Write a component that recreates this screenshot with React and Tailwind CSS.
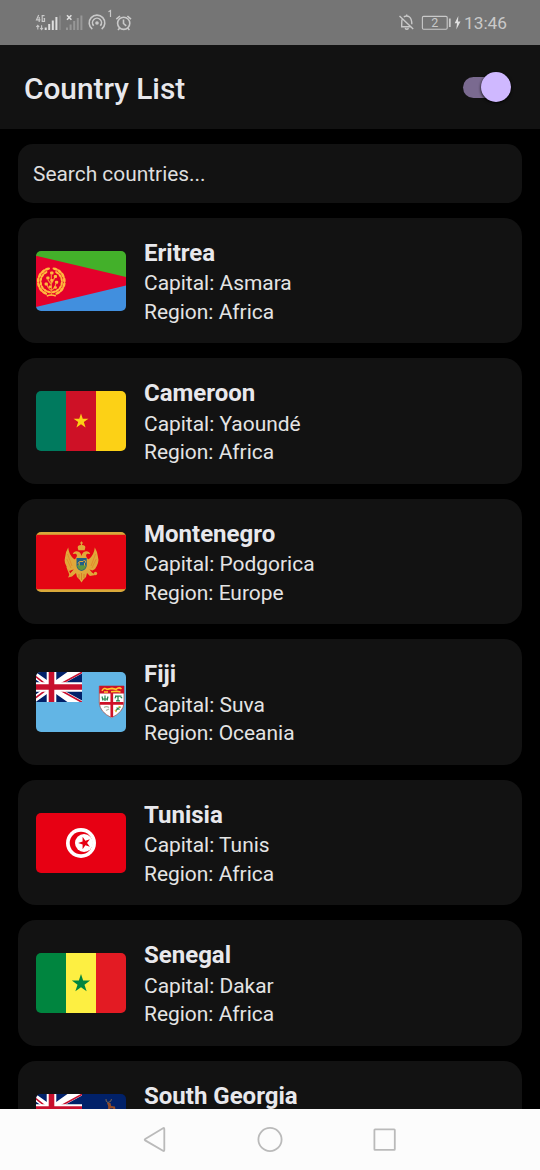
import React from 'react';

const STAR = '0,-1 .2245,-.309 .951,-.309 .363,.118 .588,.809 0,.382 -.588,.809 -.363,.118 -.951,-.309 -.2245,-.309';

function Star({ x, y, r, fill, rotate = 0 }) {
  return <polygon points={STAR} fill={fill} transform={`translate(${x} ${y}) rotate(${rotate}) scale(${r})`} />;
}

function UnionJack() {
  return (
    <svg x="0" y="0" width="46" height="30" viewBox="0 0 46 30">
      <rect width="46" height="30" fill="#012169" />
      <path d="M-7 -1L38 31M-7 31L38 -1" stroke="#fff" strokeWidth="6" />
      <path d="M15.5 15L48 -3M15.5 15L48 33" stroke="#fff" strokeWidth="6" />
      <path d="M15.5 17L48 -.8M15.5 13.2L48 31.4M-6 0L15.5 17M-6 30L15.5 14" stroke="#c8102e" strokeWidth="1.6" />
      <path d="M15.5 -1V31M-1 15H47" stroke="#fff" strokeWidth="9.6" />
      <path d="M15.5 -1V31M-1 15H47" stroke="#c8102e" strokeWidth="5.6" />
    </svg>
  );
}

const LEAVES = [26, 48, 70, 92, 114, 136, 158];

function Branch() {
  return (
    <>
      {LEAVES.map((a) => (
        <g key={a} transform={`rotate(${a})`}>
          <ellipse cx="-.6" cy="-13.1" rx="2.9" ry="1.35" transform="rotate(-6)" />
          <ellipse cx="0" cy="-10.6" rx="2.4" ry="1.1" transform="rotate(8)" />
        </g>
      ))}
    </>
  );
}

function Eritrea() {
  return (
    <>
      <rect width="90" height="30" fill="#43b02a" />
      <rect y="30" width="90" height="30" fill="#418fde" />
      <path d="M0 4.8L90 26V34.5L0 56z" fill="#e4002b" />
      <g transform="translate(15.3 30.6)" fill="#ffb93c">
        <Branch />
        <g transform="scale(-1 1)">
          <Branch />
        </g>
        <path d="M0 14V-7M0 9Q-4 6-4.5 2M0 9Q4 6 4.5 2M0 3L-3.5-2M0 2L3.5-4" fill="none" stroke="#f59a35" strokeWidth="1.1" />
        <path d="M-4.5 14.3Q0 12.6 4.5 14.3" fill="none" stroke="#ffb93c" strokeWidth="1.6" />
        <rect x="-1.2" y="-10" width="3.4" height="3" rx="1" />
        <rect x="2.5" y="-6.5" width="3.2" height="3" rx="1" />
        <rect x="-5" y="-5" width="3.2" height="3" rx="1" />
        <rect x="-1" y="-2.5" width="2.8" height="2.6" rx="1" />
        <rect x="3.7" y="-.8" width="3.2" height="3" rx="1" />
        <rect x="-6.7" y="1" width="3.2" height="3" rx="1" />
        <rect x="-2.6" y="4" width="2.8" height="2.4" rx="1" />
        <rect x="2.6" y="4.6" width="3" height="2.6" rx="1" />
      </g>
    </>
  );
}

function Cameroon() {
  return (
    <>
      <rect width="30" height="60" fill="#007a5e" />
      <rect x="30" width="30" height="60" fill="#ce1126" />
      <rect x="60" width="30" height="60" fill="#fcd116" />
      <Star x={45} y={30.2} r={7.8} fill="#fcd116" />
    </>
  );
}

function Montenegro() {
  return (
    <>
      <rect width="90" height="60" fill="#d9a93a" />
      <rect y="2.8" width="90" height="54.4" fill="#e40613" />
      <g fill="#e0a83a">
        <path d="M45.5 9.5V14M44 11H47" stroke="#e0a83a" strokeWidth="1.1" />
        <path d="M41.7 15.8Q41.5 12.8 45.5 13Q49.5 12.8 49.3 15.8L48.6 18.3H42.4z" />
        <path d="M45.5 24Q44.5 19.5 41 19.2Q37.8 19 36.8 22L39.8 21.8Q42 23 40 26Q38.6 28 38 27Q33 23 32.2 15.5Q29.5 20 29.3 24L28.6 28L29 31L30.3 34L31.6 37L33.5 39L35.7 38L37.8 37.4L34 41.5L32 45.5L36 44.5L40 41L41 45L43.5 47.5L45.5 50.5L47.5 47.5L50 45L51 41L54 44L59.5 43L56 40.5L53.5 37.5L56.5 38.5L59 37L60.8 34L62 31L62.5 28L61.8 24Q61.5 20 58.8 15.5Q58 23 53 27Q52.4 28 51 26Q49 23 51.2 21.8L54.2 22Q53.2 19 50 19.2Q46.5 19.5 45.5 24z" />
        <circle cx="59.5" cy="41.5" r="1.7" />
        <path d="M31 35L34.5 44" stroke="#e0a83a" strokeWidth="1.2" />
      </g>
      <path d="M31.5 22L36 34M30.8 27L35 36M59.5 22L55 34M60.2 27L56 36" stroke="#e2701f" strokeWidth=".5" />
      <path d="M43 42V46M45.5 41V48M48 42V46" stroke="#c9661f" strokeWidth=".6" />
      <path d="M40.5 26H50.7V34Q50 38 45.6 39Q41 38 40.5 34z" fill="#205f86" />
      <path d="M41 33.3H50.2Q49.8 37.3 45.6 38.3Q41.4 37.3 41 33.3z" fill="#61973c" />
      <path d="M42 31.5L43.5 29.5H47L48.5 28L49.8 30L48.5 31V33.6M43.2 30.5V33.6" fill="none" stroke="#e0a83a" strokeWidth="1" />
    </>
  );
}

function Fiji() {
  return (
    <>
      <rect width="90" height="60" fill="#62b5e5" />
      <UnionJack />
      <path d="M63.3 14H88V31Q87.5 40 75.6 45.7Q63.8 40 63.3 31z" fill="#fff" stroke="#a3463f" strokeWidth=".7" />
      <path d="M63.3 14H88V21.5H63.3z" fill="#ce1126" />
      <path d="M66 18.8Q68 15 71 17.3L76 16.4L80 17.4Q83 14.5 85.5 17M68 20H72M75 19.8L81 19.2L84.5 20" fill="none" stroke="#ffc72c" strokeWidth="1.6" />
      <path d="M75.8 21V45M63.8 31.3H87.5" stroke="#ce1126" strokeWidth="2.7" />
      <g fill="none" stroke="#23854c" strokeWidth="1.2">
        <path d="M66 24.5L67 28.5M69 23.5V29M72 24.5L71 28.5M66 27H72" />
        <path d="M82 29V25M79 26.3Q80 23 82 25Q84 23 86 26.3M79 24.2L85.5 24M80 28.8H84" />
        <path d="M79.5 39L82 36.5L84.5 35M80.5 35.8L83.5 37.5" />
      </g>
      <path d="M68 35.5Q70.5 33.8 73 35.5M70 38.5L73 37" fill="none" stroke="#a7b8a4" strokeWidth="1.2" />
      <path d="M79 38L80.5 40M82.5 34.5L84.5 35" stroke="#e8bf35" strokeWidth="1.4" />
    </>
  );
}

function Tunisia() {
  return (
    <>
      <rect width="90" height="60" fill="#e70013" />
      <circle cx="45" cy="30" r="15" fill="#fff" />
      <circle cx="45" cy="30" r="11.3" fill="#e70013" />
      <circle cx="48" cy="30" r="9" fill="#fff" />
      <Star x={48.6} y={30} r={6.5} fill="#e70013" rotate={-90} />
    </>
  );
}

function Senegal() {
  return (
    <>
      <rect width="30" height="60" fill="#00853f" />
      <rect x="30" width="30" height="60" fill="#fdef42" />
      <rect x="60" width="30" height="60" fill="#e31b23" />
      <Star x={45} y={30.5} r={9.6} fill="#00853f" />
    </>
  );
}

function SouthGeorgia() {
  return (
    <>
      <rect width="90" height="60" fill="#012169" />
      <UnionJack />
      <path d="M70 5Q69.5 8 72 8.5Q75.5 8 75.5 5M72 8.5L73 10.5" fill="none" stroke="#7b6552" strokeWidth="1" />
      <path d="M71 9L74.5 9L75.2 12L79 12.5L79.5 16H77.7L77 14.3L74 14.5L73.2 17H72L72.2 12z" fill="#934b28" />
      <path d="M64 15L67 17L65 20zM86.5 15L83.5 17L85 20z" fill="#fff" />
      <path d="M67 18H84V35L75.5 44L67 35z" fill="#fff" />
    </>
  );
}

const countries = [
  { name: 'Eritrea', capital: 'Asmara', region: 'Africa', Flag: Eritrea },
  { name: 'Cameroon', capital: 'Yaoundé', region: 'Africa', Flag: Cameroon },
  { name: 'Montenegro', capital: 'Podgorica', region: 'Europe', Flag: Montenegro },
  { name: 'Fiji', capital: 'Suva', region: 'Oceania', Flag: Fiji },
  { name: 'Tunisia', capital: 'Tunis', region: 'Africa', Flag: Tunisia },
  { name: 'Senegal', capital: 'Dakar', region: 'Africa', Flag: Senegal },
  { name: 'South Georgia', Flag: SouthGeorgia },
];

function StatusBar() {
  return (
    <div className="flex h-[45px] shrink-0 items-center justify-between bg-[#757575] pr-[33px] pl-[35px] text-[#c9c9c9]">
      <svg width="98" height="45" viewBox="35 0 98 45" fill="none" stroke="currentColor">
        <path d="M38.7 15L36.5 19.8H40.4M39.2 17V22M44.5 15.6H42.2V21.4H44.5V18.7H43.6" strokeWidth="1.2" />
        <path d="M37.8 25.3V29.5M36.3 27L37.8 25.3L39.2 27M41.6 25.3V29.5M40.2 28L41.6 29.7L43 28" strokeWidth="1.1" />
        <path d="M45.7 30V27.5M49.2 30V24M52.8 30V20.5M56.4 30V17" strokeWidth="2" stroke="#dedede" />
        <path d="M60 30V15.5" strokeWidth="2" stroke="#858585" />
        <path d="M67 15.3L71.4 19.7M71.4 15.3L67 19.7" strokeWidth="1.6" stroke="#dedede" />
        <path d="M67 30V27.5M70.6 30V24.5M74.2 30V21M77.8 30V18M81.4 30V15.5" strokeWidth="2" stroke="#979797" />
        <g strokeWidth="1.6">
          <path d="M92.3 29.1A7.8 7.8 0 1 1 101.7 29.1M93.7 25.8A4.5 4.5 0 1 1 100.3 25.8" />
          <circle cx="97" cy="23" r="1.8" fill="currentColor" stroke="none" />
          <path d="M108.5 11.8L110.5 10.5V17" strokeWidth="1.2" />
          <circle cx="123.7" cy="23.3" r="6.1" />
          <path d="M116.3 19.2L120 16M131 19.2L127.4 16M123.5 19.5V23.5L126.2 25.8M119.8 28L118 30M127.6 28L129.4 30" />
        </g>
      </svg>
      <div className="flex items-center">
        <svg width="66" height="45" viewBox="396 0 66 45" fill="none" stroke="currentColor" strokeWidth="1.4">
          <path d="M402 19.5Q401.7 21 401.7 26.8H411.5M403.8 17Q406.5 15 409.5 17Q411.8 18.8 411.8 24.2M399.5 16L413.2 29M406.7 14.5V16M405 28.3Q406.8 30.2 408.6 28.3" />
          <rect x="422.4" y="16.4" width="24.8" height="12.8" rx="1.2" strokeWidth="1.1" />
          <path d="M449.8 18.5V27" strokeWidth="1.8" />
          <path d="M458.3 16L454.7 23.3H457L456.3 29.5L460.5 21.6H458z" fill="#e0e0e0" stroke="none" />
          <text x="434.8" y="27.3" textAnchor="middle" fill="currentColor" stroke="none" className="font-[Roboto,sans-serif] text-[12.5px]">2</text>
        </svg>
        <span className="ml-[2px] pt-[2px] text-[17.3px] leading-none">13:46</span>
      </div>
    </div>
  );
}

function CountryCard({ name, capital, region, Flag }) {
  return (
    <div className="flex h-[125.5px] shrink-0 items-start gap-[18px] rounded-[18px] bg-[#121212] px-[18px]">
      <svg width="90" height="60" viewBox="0 0 90 60" className="mt-[33px] shrink-0 overflow-hidden rounded-[5px]">
        <Flag />
      </svg>
      <div className="pt-[19px] text-[20.95px] leading-[28.5px] text-[#e4e4e4]">
        <div className="text-[24px] leading-[32.5px] font-bold text-[#e8e8ec]">{name}</div>
        {capital && <div>Capital: {capital}</div>}
        {region && <div>Region: {region}</div>}
      </div>
    </div>
  );
}

export default function App() {
  return (
    <div className="flex h-[1170px] w-[540px] flex-col overflow-hidden bg-black font-[Roboto,sans-serif]">
      <StatusBar />
      <header className="flex h-[84px] shrink-0 items-center justify-between bg-[#121212] pr-[29px] pl-6">
        <h1 className="pt-[3px] text-[29.8px] leading-9 font-medium text-[#e8e8ec]">Country List</h1>
        <div className="flex h-[21px] w-12 items-center justify-end rounded-full bg-[#7a6a90]">
          <div className="size-[30px] shrink-0 rounded-full bg-[#cfb8ff] shadow-[0_1px_3px_#000]" />
        </div>
      </header>
      <main className="flex min-h-0 flex-1 flex-col gap-[15px] overflow-hidden px-[18px] pt-[15px]">
        <div className="flex h-[58.5px] shrink-0 items-center rounded-[15px] bg-[#121212] px-[15px] pt-[3px] text-[20.9px] text-[#dedede]">
          Search countries...
        </div>
        {countries.map((c) => (
          <CountryCard key={c.name} {...c} />
        ))}
      </main>
      <nav className="h-[61px] shrink-0 bg-[#fcfcfc]">
        <svg width="540" height="61" viewBox="0 0 540 61" fill="none" stroke="#bababa" strokeWidth="1.8">
          <path d="M163 19.2Q164.3 18.6 164.3 20V41Q164.3 42.5 163 41.7L145.2 31.4Q144.2 30.6 145.2 30z" />
          <circle cx="270" cy="30.5" r="11.6" />
          <rect x="374.4" y="20.4" width="20.4" height="20.4" rx=".6" />
        </svg>
      </nav>
    </div>
  );
}
